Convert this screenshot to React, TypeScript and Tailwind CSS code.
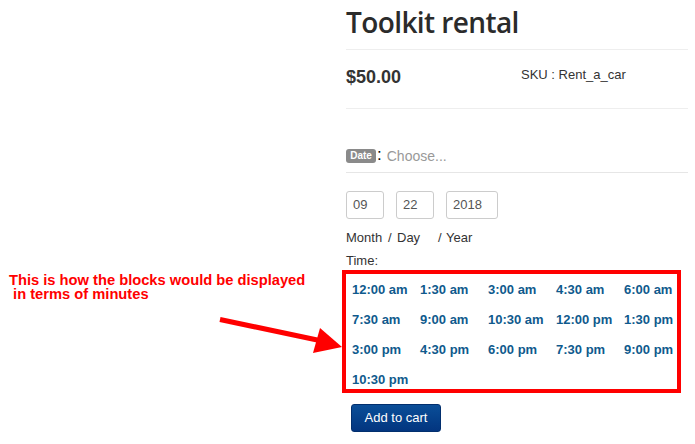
import React from "react";

const times = [
  "12:00 am", "1:30 am", "3:00 am", "4:30 am", "6:00 am",
  "7:30 am", "9:00 am", "10:30 am", "12:00 pm", "1:30 pm",
  "3:00 pm", "4:30 pm", "6:00 pm", "7:30 pm", "9:00 pm",
  "10:30 pm",
];

export default function App() {
  return (
    <div className="relative w-[695px] h-[444px] bg-white overflow-hidden font-['Liberation_Sans',Arial,sans-serif] text-[#333]">
      <div className="flex">
        {/* left annotation column */}
        <div className="w-[346px] shrink-0 pt-[273px] pl-[9px]">
          <p className="text-[14.7px] leading-[14px] font-bold text-[#ff0000] whitespace-pre">
            {"This is how the blocks would be displayed\n in terms of minutes"}
          </p>
        </div>

        {/* product column */}
        <div className="w-[342px] shrink-0">
          <div className="h-[49px]">
            <h1 className="pt-[5px] text-[28px] leading-[34px] font-semibold tracking-[-0.6px] font-['Open_Sans',sans-serif] text-[#2b2b2b]">
              Toolkit rental
            </h1>
          </div>
          <div className="border-t border-[#eeeeee] h-[59px] pt-[17px] flex items-start">
            <div className="w-[175px] text-[18px] leading-[20px] font-bold text-[#333]">$50.00</div>
            <div className="text-[13px] leading-[15px] text-[#333]">SKU : Rent_a_car</div>
          </div>
          <div className="border-t border-[#eeeeee] h-[64px] pt-[37px]">
            <div className="h-[20px] flex items-center">
              <span className="h-[14px] w-[30px] rounded-[3px] bg-[#8a8a8a] text-white text-[10px] leading-[14px] font-bold flex items-center justify-center">
                Date
              </span>
              <span className="text-[17px] leading-[20px] text-black ml-[1px] -mt-[3px]">:</span>
              <span className="text-[14px] leading-[20px] text-[#999] ml-[5px]">Choose...</span>
            </div>
          </div>
          <div className="border-t border-[#e6e6e6] pt-[18px]">
            <div className="flex gap-[12px] h-[28px]">
              <div className="w-[38px] h-[28px] border border-[#cccccc] rounded-[3px] text-[13px] leading-[26px] pl-[6px] text-[#555]">09</div>
              <div className="w-[38px] h-[28px] border border-[#cccccc] rounded-[3px] text-[13px] leading-[26px] pl-[6px] text-[#555]">22</div>
              <div className="w-[52px] h-[28px] border border-[#cccccc] rounded-[3px] text-[13px] leading-[26px] pl-[6px] text-[#555]">2018</div>
            </div>
            <div className="mt-[11px] flex text-[13px] leading-[15px] text-[#333]">
              <span className="w-[42px]">Month</span>
              <span className="w-[9px]">/</span>
              <span className="w-[41px]">Day</span>
              <span className="w-[8px]">/</span>
              <span>Year</span>
            </div>
            <div className="mt-[8px] text-[13px] leading-[15px] text-[#333]">Time:</div>
            <div className="mt-[2px] -ml-[4px] w-[339px] h-[123px] border-[4px] border-[#ff0000] pl-[6px] pt-[6px]">
              <div className="grid grid-cols-[repeat(5,68px)] gap-y-[10px]">
                {times.map((t) => (
                  <span key={t} className="text-[13px] leading-[20px] font-bold text-[#0f5a8d] whitespace-nowrap">
                    {t}
                  </span>
                ))}
              </div>
            </div>
            <button className="mt-[11px] ml-[5px] w-[90px] h-[28px] rounded-[3px] border border-[#022f6e] bg-gradient-to-b from-[#0b4e98] to-[#03357f] text-white text-[13px] leading-[26px]">
              Add to cart
            </button>
          </div>
        </div>
      </div>

      {/* red arrow overlay */}
      <svg className="absolute left-0 top-0" width="695" height="444" viewBox="0 0 695 444">
        <line x1="220" y1="319.5" x2="322" y2="341" stroke="#ff0000" strokeWidth="5" />
        <polygon points="320,328 342,347 313,353" fill="#ff0000" />
      </svg>
    </div>
  );
}
